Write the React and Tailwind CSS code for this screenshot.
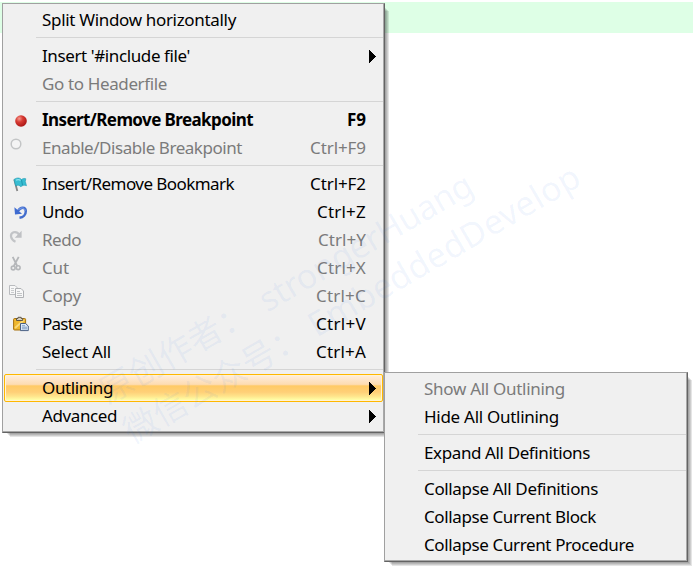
import React, { useLayoutEffect, useRef } from 'react';

// Text whose letter spacing is adjusted so that it spans a given width.
function Fitted({ text, width, className = '' }) {
  const ref = useRef(null);
  useLayoutEffect(() => {
    const el = ref.current;
    el.style.letterSpacing = '0px';
    const natural = el.getBoundingClientRect().width;
    el.style.letterSpacing = `${(width - natural) / text.length}px`;
  }, [text, width]);
  return <span ref={ref} className={`whitespace-pre ${className}`}>{text}</span>;
}

const Icon = ({ children }) => (
  <svg className="block h-7 w-8" viewBox="1 0 32 28" fill="none">{children}</svg>
);

const icons = {
  breakpoint: (
    <Icon>
      <defs>
        <radialGradient id="red" cx="0.35" cy="0.3" r="0.75">
          <stop offset="0" stopColor="#f59a90" />
          <stop offset="0.4" stopColor="#d83c34" />
          <stop offset="1" stopColor="#a81414" />
        </radialGradient>
      </defs>
      <circle cx="17" cy="15" r="5.8" fill="url(#red)" />
    </Icon>
  ),
  circle: (
    <Icon>
      <circle cx="12" cy="10" r="4.8" fill="#f4f4f4" stroke="#c3c5c6" strokeWidth="1.5" />
    </Icon>
  ),
  flag: (
    <Icon>
      <path d="M10.3 9.5L13.3 21" stroke="#858585" strokeWidth="1.8" />
      <path d="M10 9.5C12.5 7.5 15.5 7.5 17.5 9.5C19 8.3 20.5 8.2 21.8 8.8L21.3 11.5L22.5 15.7C20 14.8 18 15.5 16.9 16.8C15 14.7 13.1 14.8 11.7 16Z" fill="#37bdd2" stroke="#209bb3" strokeWidth="0.6" />
      <path d="M12 10.2C14 9.2 15.5 9.7 16.5 10.5" stroke="#8be2ee" strokeWidth="1.1" />
      <path d="M17.5 9.8L18.5 15.2" stroke="#168aa4" strokeWidth="0.8" />
    </Icon>
  ),
  undo: (
    <Icon>
      <path d="M14 13C16.5 8.5 21.6 8.6 21.8 13.1C21.9 16.8 19.2 19.3 15.5 19.8" stroke="#416ccc" strokeWidth="2.5" />
      <path d="M14.2 12.2C16.4 9 20.8 9.2 21.2 12.8" stroke="#84a7f0" strokeWidth="0.9" />
      <path d="M10.4 9.3L11 16.6L18 15.8Z" fill="#3e6bd0" />
    </Icon>
  ),
  redo: (
    <Icon>
      <path d="M11.5 15.8C6.3 13.5 5.5 8 9.5 6.3C12 5.6 14 6.8 15.1 8.8" stroke="#c2c4c7" strokeWidth="2.2" />
      <path d="M17.6 4.8V11.8H10.8Z" fill="#bfc1c4" />
    </Icon>
  ),
  cut: (
    <Icon>
      <path d="M8.7 2.8L13.2 12M14.7 2.8L9.8 12" stroke="#b4b6b9" strokeWidth="1.8" />
      <circle cx="9.2" cy="14" r="1.9" stroke="#b5b7ba" strokeWidth="1.6" />
      <circle cx="14.2" cy="13.7" r="1.9" stroke="#b5b7ba" strokeWidth="1.6" />
    </Icon>
  ),
  copy: (
    <Icon>
      <path d="M5.5 3.5H11L13 5.5V12.5H5.5Z" fill="#f8f8f8" stroke="#b9bbbe" />
      <path d="M7 6.5H10M7 8.5H10M7 10.5H10" stroke="#c9cbcd" />
      <path d="M11.5 6.5H17L19.5 9V15.5H11.5Z" fill="#f8f8f8" stroke="#afb1b4" />
      <path d="M13 9.5H16M13 11.5H18M13 13.5H18" stroke="#c2c4c6" />
    </Icon>
  ),
  paste: (
    <Icon>
      <rect x="9.6" y="8.5" width="12" height="11.5" rx="1" fill="#eeb72e" stroke="#a5700f" />
      <path d="M11 18L20 10" stroke="#fbda79" strokeWidth="1.8" />
      <path d="M12.5 10.5V8.5H14V7.3H17.2V8.5H18.7V10.5Z" fill="#d8d2c0" stroke="#5f5646" />
      <path d="M16.5 13.5H21.5L24.3 16V20.6H16.5Z" fill="#dce9f8" stroke="#4a6287" />
      <path d="M18 15.7H21M18 17.2H23M18 18.8H23" stroke="#6c8db8" strokeWidth="0.8" />
    </Icon>
  ),
};

const mainItems = [
  { text: 'Split Window horizontally', w: 194 },
  null,
  { text: "Insert '#include file'", w: 148, sub: true },
  { text: 'Go to Headerfile', w: 125, off: true },
  null,
  { text: 'Insert/Remove Breakpoint', w: 211, bold: true, key: 'F9', kw: 19, icon: 'breakpoint' },
  { text: 'Enable/Disable Breakpoint', w: 200, off: true, key: 'Ctrl+F9', kw: 56, icon: 'circle' },
  null,
  { text: 'Insert/Remove Bookmark', w: 192, key: 'Ctrl+F2', kw: 56, icon: 'flag' },
  { text: 'Undo', w: 42, key: 'Ctrl+Z', kw: 49, icon: 'undo' },
  { text: 'Redo', w: 39, off: true, key: 'Ctrl+Y', kw: 48, icon: 'redo' },
  { text: 'Cut', w: 27, off: true, key: 'Ctrl+X', kw: 49, icon: 'cut' },
  { text: 'Copy', w: 39, off: true, key: 'Ctrl+C', kw: 50, icon: 'copy' },
  { text: 'Paste', w: 40, key: 'Ctrl+V', kw: 50, icon: 'paste' },
  { text: 'Select All', w: 69, key: 'Ctrl+A', kw: 50 },
  null,
  { text: 'Outlining', w: 71, sub: true, active: true },
  { text: 'Advanced', w: 75, sub: true },
];

const subItems = [
  { text: 'Show All Outlining', w: 141, off: true },
  { text: 'Hide All Outlining', w: 135 },
  null,
  { text: 'Expand All Definitions', w: 166 },
  null,
  { text: 'Collapse All Definitions', w: 174 },
  { text: 'Collapse Current Block', w: 172 },
  { text: 'Collapse Current Procedure', w: 210 },
];

function Row({ item }) {
  if (!item) {
    return <div className="h-2 pt-[3px] pl-8"><div className="h-px bg-[#d5d5d5]" /></div>;
  }
  const look = item.active
    ? 'rounded-[2px] border border-[#ffb700] bg-[linear-gradient(to_bottom,#feeede_0%,#fddcb2_36%,#ffca65_42%,#ffd078_66%,#ffe58c_82%,#ffffa8_96%)] shadow-[inset_0_0_0_1px_#fff3d5]'
    : 'border border-transparent';
  return (
    <div className={`flex h-7 items-center ${look} ${item.off ? 'text-[#7b7b7b]' : 'text-black'} ${item.bold ? 'font-bold' : ''}`}>
      <div className="h-7 w-[37px] shrink-0">{item.icon && icons[item.icon]}</div>
      <Fitted text={item.text} width={item.w} />
      <div className="flex-1" />
      {item.key && <Fitted text={item.key} width={item.kw} className="mr-4" />}
      {item.sub && (
        <svg className="mr-[6px] h-[13px] w-[7px]" viewBox="0 0 7 13" shapeRendering="crispEdges">
          <path d="M0 0L7 6.5L0 13Z" fill="#000" />
        </svg>
      )}
    </div>
  );
}

function Menu({ items, className }) {
  return (
    <div className={`absolute isolate border border-t-[#a0a0a0] border-r-[#646464] border-b-[#646464] border-l-[#a0a0a0] bg-[#a8a8a8] pr-px pb-px before:absolute before:top-[3px] before:-right-px before:-bottom-px before:left-[3px] before:-z-10 before:shadow-[1px_1px_0_#0000001a,2px_2px_0_#0000001a,3px_3px_0_#0000001a,4px_4px_0_#0000001a] before:content-[''] ${className}`}>
      <div className="h-full bg-[#f0f0f0] pt-[2px] pb-px pl-px">
        {items.map((item, i) => <Row key={i} item={item} />)}
      </div>
    </div>
  );
}

export default function App() {
  return (
    <div className="relative h-[566px] w-[693px] overflow-hidden bg-white pt-[2px] font-['Noto_Sans','Open_Sans',sans-serif] text-[17px] leading-[26px]">
      <div className="h-[31px] bg-[#deffe6]" />
      <Menu items={mainItems} className="top-[3px] left-[2px] h-[430px] w-[383px]" />
      <svg className="pointer-events-none absolute inset-0 h-[566px] w-[693px] font-['Noto_Sans','Noto_Sans_CJK_SC',sans-serif] text-[34px] font-normal" viewBox="0 0 693 566">
        <g transform="rotate(-30)" fill="#3078e6" fillOpacity="0.07">
          <text x="-109" y="404.5" textLength="170">原创作者：</text>
          <text x="75" y="404.5" textLength="241">strongerHuang</text>
          <text x="-108" y="451" textLength="204">微信公众号：</text>
          <text x="105" y="451" textLength="308">EmbeddedDevelop</text>
        </g>
      </svg>
      <Menu items={subItems} className="top-[372px] left-[384px] h-[190px] w-[304px]" />
    </div>
  );
}
